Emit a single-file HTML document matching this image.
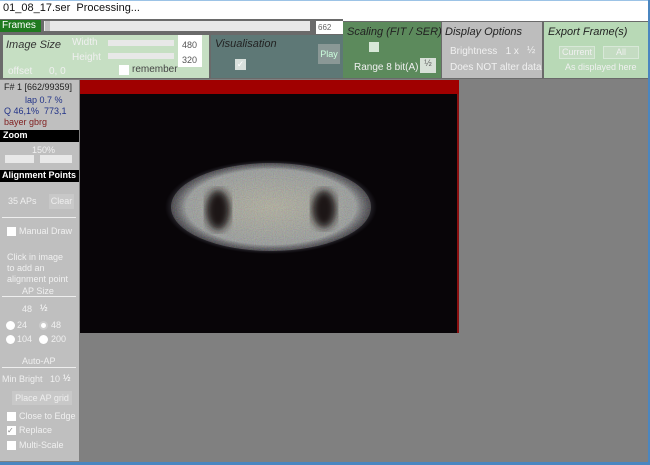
<!DOCTYPE html>
<html><head><meta charset="utf-8"><style>
*{margin:0;padding:0;box-sizing:border-box}
body{width:650px;height:465px;overflow:hidden;background:#808080;font-family:"Liberation Sans",sans-serif;font-size:10px;position:relative}
.a{position:absolute}
.t{color:#f0f0f0;white-space:nowrap}
.it{font-style:italic;font-size:11px}
.wb{background:#e8e8e8}
</style></head><body>
<div class="a" style="left:0;top:0;width:650px;height:21px;background:#fff;border-top:1px solid #9cc3e6"></div>
<div class="a" style="left:3px;top:2px;font-size:11px;color:#111">01_08_17.ser&nbsp; Processing...</div>
<div class="a" style="left:0;top:19px;width:343px;height:16px;background:#6a6a6a"></div>
<div class="a" style="left:0;top:20px;width:41px;height:12px;background:#1f7a1f;color:#fff;font-size:10px;padding-left:2px;line-height:12px">Frames</div>
<div class="a wb" style="left:44px;top:21px;width:266px;height:10px"></div>
<div class="a" style="left:45px;top:21px;width:5px;height:10px;background:#c0c0c0"></div>
<div class="a" style="left:316px;top:21px;width:27px;height:13px;background:#fff;color:#666;font-size:8px;padding:2px">662</div>
<!-- panels -->
<div class="a" style="left:0;top:35px;width:343px;height:44px;background:#6a6a6a"></div>
<div class="a" style="left:343px;top:21px;width:307px;height:58px;background:#6a6a6a"></div>
<div class="a" style="left:3px;top:35px;width:206px;height:43px;background:#c6dfc3"></div>
<div class="a it" style="left:6px;top:39px;color:#333">Image Size</div>
<div class="a t" style="left:72px;top:37px">Width</div>
<div class="a t" style="left:72px;top:52px">Height</div>
<div class="a wb" style="left:108px;top:40px;width:66px;height:6px"></div>
<div class="a wb" style="left:108px;top:53px;width:66px;height:6px"></div>
<div class="a" style="left:178px;top:35px;width:24px;height:32px;background:#fff;color:#555;font-size:9px;padding:3px 0 0 4px;line-height:15px">480<br>320</div>
<div class="a" style="left:119px;top:65px;width:10px;height:10px;background:#fff"></div>
<div class="a" style="left:132px;top:64px;color:#444;font-size:10px">remember</div>
<div class="a t" style="left:8px;top:66px">offset&nbsp;&nbsp;&nbsp;&nbsp;&nbsp; 0, 0</div>
<div class="a" style="left:211px;top:35px;width:132px;height:43px;background:#5e7876"></div>
<div class="a it" style="left:215px;top:38px;color:#222">Visualisation</div>
<div class="a" style="left:235px;top:59px;width:11px;height:11px;background:#d8e0dc;color:#fff;font-size:9px;text-align:center">✓</div>
<div class="a" style="left:318px;top:44px;width:22px;height:20px;background:#8a9896;color:#cfd;font-size:9px;text-align:center;line-height:20px">Play</div>
<div class="a" style="left:343px;top:22px;width:98px;height:56px;background:#5c8a5c"></div>
<div class="a it" style="left:347px;top:26px;color:#222">Scaling (FIT / SER)</div>
<div class="a" style="left:369px;top:42px;width:10px;height:10px;background:#d8e8d8"></div>
<div class="a t" style="left:354px;top:62px">Range 8 bit(A)</div>
<div class="a" style="left:420px;top:58px;width:16px;height:15px;background:#d8e0d8;color:#666;font-size:9px;text-align:center">½</div>
<div class="a" style="left:442px;top:22px;width:100px;height:56px;background:#bdbdbd"></div>
<div class="a it" style="left:445px;top:26px;color:#222">Display Options</div>
<div class="a t" style="left:450px;top:46px">Brightness&nbsp;&nbsp; 1 x</div>
<div class="a t" style="left:450px;top:62px">Does NOT alter data</div>
<div class="a" style="left:527px;top:45px;width:14px;height:14px;color:#eee;font-size:10px">½</div>
<div class="a" style="left:544px;top:22px;width:104px;height:56px;background:#b8d9b6"></div>
<div class="a it" style="left:548px;top:26px;color:#222">Export Frame(s)</div>
<div class="a" style="left:559px;top:46px;width:36px;height:13px;background:#c4dcc2;border:1px solid #d8e8d8;color:#f0f0f0;font-size:9px;text-align:center">Current</div>
<div class="a" style="left:603px;top:46px;width:36px;height:13px;background:#c4dcc2;border:1px solid #d8e8d8;color:#f0f0f0;font-size:9px;text-align:center">All</div>
<div class="a t" style="left:565px;top:62px;font-size:9px">As displayed here</div>
<!-- sidebar -->
<div class="a" style="left:0;top:80px;width:79px;height:381px;background:#bfbfbf"></div>
<div class="a" style="left:4px;top:82px;color:#222;font-size:9px">F# 1 [662/99359]</div>
<div class="a" style="left:25px;top:95px;color:#223388;font-size:9px">lap 0.7 %</div>
<div class="a" style="left:4px;top:106px;color:#223388;font-size:9px">Q 46,1%&nbsp; 773,1</div>
<div class="a" style="left:4px;top:117px;color:#802020;font-size:9px">bayer gbrg</div>
<div class="a" style="left:0;top:130px;width:79px;height:12px;background:#000;color:#fff;font-size:9px;font-weight:bold;padding-left:3px">Zoom</div>
<div class="a t" style="left:32px;top:145px;font-size:9px">150%</div>
<div class="a wb" style="left:5px;top:155px;width:29px;height:8px"></div>
<div class="a wb" style="left:40px;top:155px;width:32px;height:8px"></div>
<div class="a" style="left:0;top:170px;width:79px;height:12px;background:#000;color:#fff;font-size:9px;font-weight:bold;padding-left:2px">Alignment Points</div>
<div class="a t" style="left:8px;top:196px;font-size:9px">35 APs</div>
<div class="a" style="left:49px;top:194px;width:25px;height:15px;background:#c8c8c8;color:#eee;font-size:9px;text-align:center;line-height:15px">Clear</div>
<div class="a" style="left:2px;top:217px;width:74px;height:1px;background:#eee"></div>
<div class="a" style="left:7px;top:227px;width:9px;height:9px;background:#fff"></div>
<div class="a t" style="left:19px;top:226px;font-size:9px">Manual Draw</div>
<div class="a t" style="left:7px;top:252px;font-size:9px;line-height:11px">Click in image<br>to add an<br>alignment point</div>
<div class="a t" style="left:22px;top:286px;font-size:9px">AP Size</div>
<div class="a" style="left:2px;top:296px;width:74px;height:1px;background:#eee"></div>
<div class="a t" style="left:22px;top:304px;font-size:9px">48</div>
<div class="a" style="left:40px;top:303px;width:13px;height:13px;color:#fff;font-size:9px">½</div>
<div class="a" style="left:6px;top:321px;width:9px;height:9px;border-radius:50%;background:#fff"></div>
<div class="a t" style="left:17px;top:320px;font-size:9px">24</div>
<div class="a" style="left:39px;top:321px;width:9px;height:9px;border-radius:50%;background:#fff;border:2px solid #ccc"></div>
<div class="a t" style="left:51px;top:320px;font-size:9px">48</div>
<div class="a" style="left:6px;top:335px;width:9px;height:9px;border-radius:50%;background:#fff"></div>
<div class="a t" style="left:17px;top:334px;font-size:9px">104</div>
<div class="a" style="left:39px;top:335px;width:9px;height:9px;border-radius:50%;background:#fff"></div>
<div class="a t" style="left:51px;top:334px;font-size:9px">200</div>
<div class="a t" style="left:22px;top:356px;font-size:9px">Auto-AP</div>
<div class="a" style="left:2px;top:367px;width:74px;height:1px;background:#eee"></div>
<div class="a t" style="left:2px;top:374px;font-size:9px">Min Bright&nbsp;&nbsp; 10</div>
<div class="a" style="left:63px;top:373px;width:13px;height:13px;color:#fff;font-size:9px">½</div>
<div class="a" style="left:12px;top:391px;width:60px;height:14px;background:#c8c8c8;color:#eee;font-size:9px;text-align:center;line-height:14px">Place AP grid</div>
<div class="a" style="left:7px;top:412px;width:9px;height:9px;background:#fff"></div>
<div class="a t" style="left:19px;top:411px;font-size:9px">Close to Edge</div>
<div class="a" style="left:7px;top:426px;width:9px;height:9px;background:#fff;color:#888;font-size:8px;line-height:9px">✓</div>
<div class="a t" style="left:19px;top:425px;font-size:9px">Replace</div>
<div class="a" style="left:7px;top:441px;width:9px;height:9px;background:#fff"></div>
<div class="a t" style="left:19px;top:440px;font-size:9px">Multi-Scale</div>
<!-- image -->
<div class="a" style="left:80px;top:80px;width:379px;height:253px;background:#080508;border-right:2px solid #8a1010"></div>
<div class="a" style="left:80px;top:80px;width:379px;height:14px;background:#a00000"></div>
<svg class="a" style="left:80px;top:94px" width="377" height="239">
<defs>
<radialGradient id="g" cx="50%" cy="50%" r="50%"><stop offset="0" stop-color="#aaa894"/><stop offset="0.8" stop-color="#8e9290"/><stop offset="1" stop-color="#4a4a5a" stop-opacity="0"/></radialGradient>
<filter id="b"><feGaussianBlur stdDeviation="4"/></filter>
<filter id="n"><feTurbulence type="fractalNoise" baseFrequency="0.9" numOctaves="1" seed="3"/><feColorMatrix values="1 0 0 0 0  0 1 0 0 0  0 0 1 0 0  0 0 0 0 0.3"/><feComposite in2="SourceGraphic" operator="in"/></filter>
</defs>
<ellipse cx="191" cy="113" rx="106" ry="47" fill="url(#g)"/>
<ellipse cx="191" cy="113" rx="100" ry="44" fill="#fff" filter="url(#n)"/>
<ellipse cx="138" cy="116" rx="12" ry="20" fill="#1a1418" filter="url(#b)"/>
<ellipse cx="244" cy="115" rx="12" ry="19" fill="#1a1418" filter="url(#b)"/>
</svg>
<div class="a" style="left:648px;top:0;width:2px;height:465px;background:#4a86c0"></div>
<div class="a" style="left:0;top:462px;width:650px;height:3px;background:#4a86c0"></div>
</body></html>
